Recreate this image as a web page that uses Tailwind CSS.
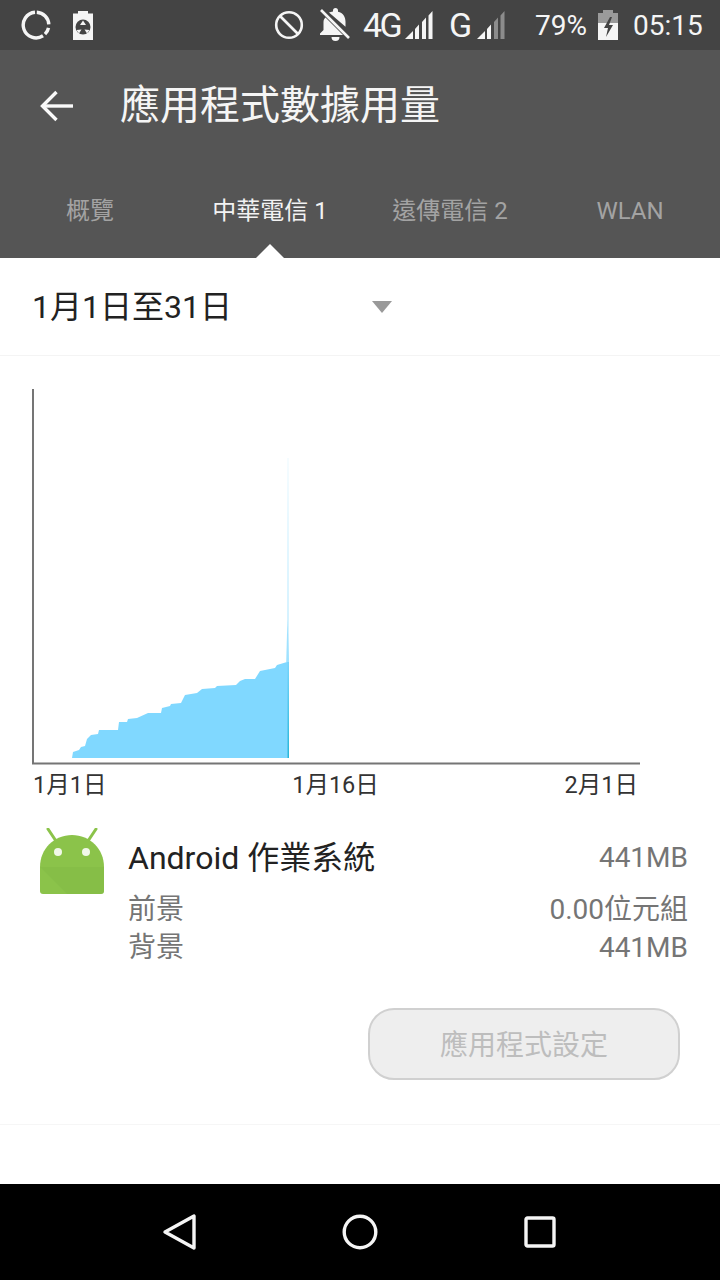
<!DOCTYPE html>
<html lang="zh-Hant">
<head>
    <meta charset="UTF-8">
    <meta name="viewport" content="width=device-width, initial-scale=1.0">
    <title>應用程式數據用量</title>
    <script src="https://cdn.jsdelivr.net/npm/@tailwindcss/browser@4"></script>
</head>
<body class="bg-white font-['Roboto','Noto_Sans_CJK_TC',sans-serif]">
<div class="w-[720px] h-[1280px] flex flex-col overflow-hidden">

    <!-- status bar -->
    <div class="h-[50px] bg-[#444444] flex items-center text-[#f5f5f5] shrink-0">
        <svg class="ml-[21px]" width="30" height="30" viewBox="0 0 30 30" fill="none" stroke="#f5f5f5" stroke-width="3.4">
            <path d="M15.800 2.200a12.800 12.800 0 0 1 12 12.200"/>
            <path d="M27.500 17.800a12.800 12.800 0 0 1-3.500 6.300"/>
            <path d="M22 25.800a12.800 12.800 0 1 1-8-23.500"/>
        </svg>
        <svg class="ml-[22px]" width="20" height="29" viewBox="0 0 20 29">
            <path fill="#f5f5f5" d="M5 0h10v2.500h5V29H0V2.500h5z"/>
            <circle cx="10" cy="16" r="7.500" fill="#444444"/>
            <path fill="#f5f5f5" d="M10 9.500l3 4.500H7zM3.500 19l5-.5-2.500 4zM16.500 19l-5-.5 2.500 4z"/>
        </svg>
        <svg class="ml-[181px]" width="30" height="30" viewBox="0 0 30 30" fill="none" stroke="#f5f5f5" stroke-width="2.6">
            <circle cx="15" cy="15" r="12.8"/>
            <path d="M6 6l18 18"/>
        </svg>
        <svg class="ml-[15px]" width="32" height="34" viewBox="0 0 32 34">
            <path fill="#f5f5f5" d="M14 2.500a2.500 2.500 0 0 1 5 0v1.200c5 1.200 7.500 5 7.500 10v5L10 4.500c1-.4 2.500-.9 4-1zM6.500 9.500 24 27H1v-1.500l3.500-3.500v-8c0-1.800.7-3.200 2-4.500zM12.500 29h8a4 4 0 0 1-8 0z"/>
            <path d="M2 2l28 28" stroke="#f5f5f5" stroke-width="2.600"/>
            <path d="M4.500 1l27 27" stroke="#444444" stroke-width="1.500"/>
        </svg>
        <span class="ml-[12px] w-[37px] text-[34px] leading-none tracking-[-2.5px]">4G</span>
        <svg class="ml-[5px] mt-[-1px]" width="28" height="28" viewBox="0 0 28 28" fill="#f5f5f5">
            <path d="M0 28l8-8v8zM10 18l4-4.500V28h-4zM17 11l4-4.500V28h-4zM23.500 4.500l4-4.500v28h-4z"/>
        </svg>
        <span class="ml-[16px] w-[24px] text-[34px] leading-none">G</span>
        <svg class="ml-[4px] mt-[-1px]" width="28" height="28" viewBox="0 0 28 28">
            <path fill="#f5f5f5" d="M0 28l8-8v8zM10 18l4-4.500V28h-4z"/>
            <path fill="#8c8c8c" d="M17 11l4-4.500V28h-4zM23.500 4.500l4-4.500v28h-4z"/>
        </svg>
        <span class="ml-[30px] w-[51px] mt-[2px] text-[28px] leading-none whitespace-nowrap">79%</span>
        <svg class="ml-[12px]" width="20" height="30" viewBox="0 0 20 30">
            <path fill="#9a9a9a" d="M5 0h10v3h5v10H0V3h5z"/>
            <path fill="#f5f5f5" d="M0 13h20v17H0z"/>
            <path fill="#444444" d="M12 7l-6 11h4l-2 9 7-12h-4l3-8z"/>
        </svg>
        <span class="ml-[15px] mt-[2px] text-[28px] leading-none">05:15</span>
    </div>

    <!-- app bar -->
    <div class="h-[208px] bg-[#555555] flex flex-col shrink-0 relative">
        <div class="h-[112px] flex items-center">
            <svg class="ml-[40px]" width="34" height="32" viewBox="0 0 34 32" fill="none" stroke="#fafafa" stroke-width="3.400">
                <path d="M33 16H3"/>
                <path d="M16.500 2 2.500 16l14 14"/>
            </svg>
            <span class="ml-[46px] text-[40px] leading-none text-[#f5f5f5]">應用程式數據用量</span>
        </div>
        <div class="grid grid-cols-4 mt-[31px] text-[24px] leading-[36px] text-center text-[#a3a3a3]">
            <span>概覽</span>
            <span class="text-[#f2f2f2]">中華電信 1</span>
            <span>遠傳電信 2</span>
            <span>WLAN</span>
        </div>
        <div class="absolute left-[256px] bottom-0 w-0 h-0 border-x-[14px] border-x-transparent border-b-[14px] border-b-white"></div>
    </div>

    <!-- date range -->
    <div class="h-[98px] border-b border-[#f4f4f4] flex items-center shrink-0">
        <span class="ml-[32px] text-[32px] leading-none text-[#222222]">1月1日至31日</span>
        <span class="ml-[140px] w-0 h-0 border-x-[10px] border-x-transparent border-t-[12px] border-t-[#999999]"></span>
    </div>

    <!-- chart -->
    <svg class="block shrink-0" width="720" height="414" viewBox="0 356 720 414">
        <defs>
            <linearGradient id="spike" x1="0" y1="0" x2="0" y2="1">
                <stop offset="0" stop-color="#80d8ff" stop-opacity="0.15"/>
                <stop offset="1" stop-color="#80d8ff" stop-opacity="0.8"/>
            </linearGradient>
            <linearGradient id="edge" x1="0" y1="0" x2="0" y2="1">
                <stop offset="0" stop-color="#29b6d8" stop-opacity="0.1"/>
                <stop offset="1" stop-color="#29b6d8"/>
            </linearGradient>
        </defs>
        <polygon fill="#80d8ff" points="72,758 73,752 79,750 81,747 85,746 87,739 91,735 98,734 99,730 118,730 119,722 127,722 128,719 137,718 148,713 161,713 162,708 170,706 171,704 181,703 185,695 197,693 202,689 215,688 217,686 236,685 240,681 245,679 255,679 260,671 275,668 277,665 287,662 289,662 289,758"/>
        <path fill="url(#spike)" d="M287.500 458h1v204h-1z"/>
        <path fill="#80d8ff" opacity="0.6" d="M287.500 620l1.500 42h-3z"/>
        <path fill="url(#edge)" d="M287.500 662h1.500v96h-1.500z"/>
        <path fill="none" stroke="#757575" stroke-width="2" d="M33 389V763.500H640"/>
    </svg>

    <!-- axis labels -->
    <div class="flex justify-between items-center h-[32px] pl-[33px] pr-[82px] text-[23.500px] leading-none text-[#333333] shrink-0">
        <span>1月1日</span>
        <span>1月16日</span>
        <span>2月1日</span>
    </div>

    <!-- app usage -->
    <div class="flex mt-[18px] shrink-0">
        <svg class="ml-[38px] mt-[8px]" width="68" height="70" viewBox="0 0 68 70">
            <path d="M10 1l8 12M58 1l-8 12" stroke="#8bc34a" stroke-width="3" stroke-linecap="round"/>
            <path fill="#8bc34a" d="M2 39C2 21 16 7 34 7s32 14 32 32v24a3 3 0 0 1-3 3H5a3 3 0 0 1-3-3z"/>
            <path fill="#7cb342" d="M2 39h64v24a3 3 0 0 1-3 3H29z" opacity="0.3"/>
            <circle cx="20" cy="24" r="4" fill="#f1f8e9"/>
            <circle cx="48" cy="24" r="4" fill="#f1f8e9"/>
        </svg>
        <div class="ml-[22px] w-[560px] mt-[16px]">
            <div class="flex justify-between items-center h-[44px]">
                <span class="text-[32px] leading-none text-[#222222]">Android 作業系統</span>
                <span class="text-[28px] leading-none text-[#757575]">441MB</span>
            </div>
            <div class="flex justify-between items-center h-[38px] mt-[11px] text-[28px] leading-none text-[#757575]">
                <span>前景</span>
                <span>0.00位元組</span>
            </div>
            <div class="flex justify-between items-center h-[38px] text-[28px] leading-none text-[#757575]">
                <span>背景</span>
                <span>441MB</span>
            </div>
        </div>
    </div>

    <!-- settings button -->
    <div class="flex justify-end pr-[40px] mt-[41px] shrink-0">
        <button class="w-[312px] h-[72px] pt-[3px] rounded-[26px] border-2 border-[#d0d0d0] bg-[#eeeeee] text-[28px] leading-none text-[#bdbdbd]">應用程式設定</button>
    </div>

    <div class="flex-1 mt-[44px] border-t border-[#f6f6f6]"></div>

    <!-- navigation bar -->
    <div class="h-[96px] bg-black flex items-center shrink-0">
        <svg class="ml-[162px]" width="36" height="38" viewBox="0 0 36 38" fill="none" stroke="#f5f5f5" stroke-width="3.400" stroke-linejoin="round">
            <path d="M32 3v32L3 19z"/>
        </svg>
        <svg class="ml-[144px]" width="36" height="36" viewBox="0 0 36 36" fill="none" stroke="#f5f5f5" stroke-width="3.400">
            <circle cx="18" cy="18" r="15.800"/>
        </svg>
        <svg class="ml-[146px]" width="32" height="32" viewBox="0 0 32 32" fill="none" stroke="#f5f5f5" stroke-width="3.400">
            <rect x="2" y="2" width="28" height="28" rx="1.500"/>
        </svg>
    </div>
</div>
</body>
</html>
